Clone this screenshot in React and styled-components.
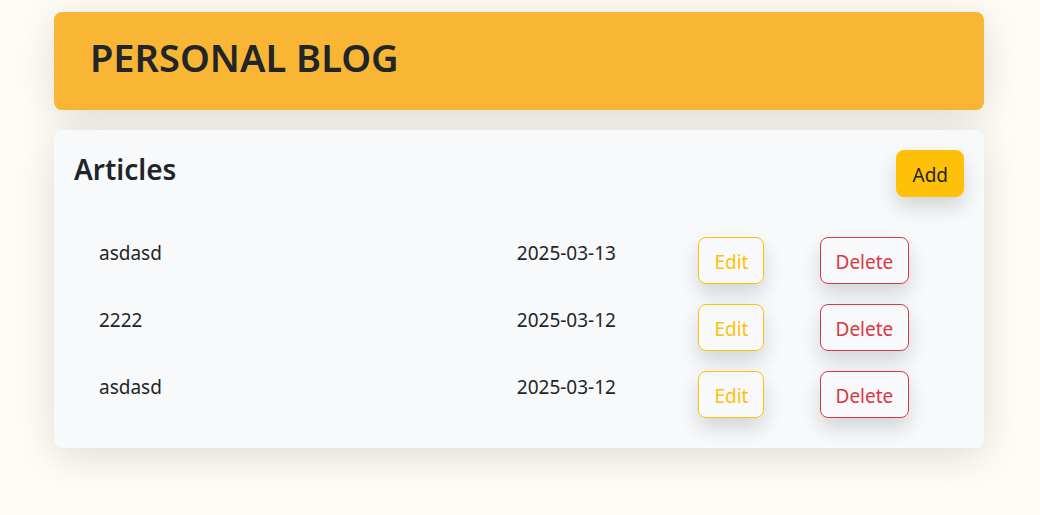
import React from "react";
import styled, { createGlobalStyle, css } from "styled-components";

const GlobalStyle = createGlobalStyle`
  *, *::before, *::after { box-sizing: border-box; }
  body {
    margin: 0;
    background: #fffcf5;
    color: #212529;
    font-family: "Segoe UI", "Noto Sans", "Open Sans", sans-serif;
    font-size: 19px;
    line-height: 30px;
  }
`;

const Page = styled.main`
  display: flex;
  flex-direction: column;
  gap: 20px;
  min-height: 100vh;
  padding: 12px 56px 40px 54px;
`;

const surface = css`
  border-radius: 8px;
  box-shadow: 0 8px 40px rgba(0, 0, 0, 0.13);
`;

const Banner = styled.header`
  ${surface}
  padding: 21px 36px 29px;
  background: #f8b634;
`;

const Title = styled.h1`
  margin: 0;
  font-size: 38px;
  font-weight: 600;
  line-height: 48px;
`;

const Panel = styled.section`
  ${surface}
  padding: 20px 20px 30px;
  background: #f8f9fb;
`;

const PanelHeader = styled.div`
  display: flex;
  justify-content: space-between;
  align-items: flex-start;
  margin-bottom: 40px;
`;

const Subtitle = styled.h2`
  margin: 0;
  font-size: 28px;
  font-weight: 600;
  line-height: 38px;
`;

const tones = {
  add: css`background: #ffc107; border-color: #ffc107; color: #212529;`,
  edit: css`background: transparent; border-color: #ffc107; color: #ffc107;`,
  remove: css`background: transparent; border-color: #dc3545; color: #dc3545;`,
};

const Button = styled.button`
  display: block;
  padding: 9px 15px 6px;
  border: 1px solid;
  border-radius: 8px;
  box-shadow: 0 10px 20px rgba(0, 0, 0, 0.15);
  font: inherit;
  cursor: pointer;
  ${({ $tone }) => tones[$tone]}
`;

const List = styled.div`
  padding-left: 25px;
`;

const Table = styled.table`
  width: 100%;
  table-layout: fixed;
  border-collapse: collapse;
  line-height: 32px;
`;

const Column = styled.col`
  width: ${({ $width }) => $width};
`;

const Cell = styled.td`
  padding: 0;
  vertical-align: top;
  tr + tr > & { padding-top: 20px; }

  ${Button} { line-height: 30px; }
`;

const articles = [
  { id: 1, title: "asdasd", date: "2025-03-13" },
  { id: 2, title: "2222", date: "2025-03-12" },
  { id: 3, title: "asdasd", date: "2025-03-12" },
];

export default function App() {
  return (
    <>
      <GlobalStyle />
      <Page>
        <Banner>
          <Title>PERSONAL BLOG</Title>
        </Banner>
        <Panel aria-labelledby="articles-title">
          <PanelHeader>
            <Subtitle id="articles-title">Articles</Subtitle>
            <Button type="button" $tone="add">Add</Button>
          </PanelHeader>
          <List>
            <Table aria-labelledby="articles-title">
              <colgroup>
                <Column $width="48.3%" />
                <Column $width="21%" />
                <Column $width="14%" />
                <Column />
              </colgroup>
              <tbody>
                {articles.map(({ id, title, date }) => (
                  <tr key={id}>
                    <Cell>{title}</Cell>
                    <Cell>{date}</Cell>
                    <Cell><Button type="button" $tone="edit">Edit</Button></Cell>
                    <Cell><Button type="button" $tone="remove">Delete</Button></Cell>
                  </tr>
                ))}
              </tbody>
            </Table>
          </List>
        </Panel>
      </Page>
    </>
  );
}
